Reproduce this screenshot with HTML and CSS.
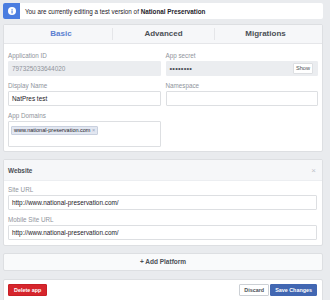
FILE: index.html
```html
<!DOCTYPE html>
<html lang="en">
<head>
<meta charset="utf-8">
<title>App Settings</title>
<link rel="stylesheet" href="styles.css">
</head>
<body>
<div class="page">

  <div class="notice">
    <div class="notice-icon">
      <svg width="8" height="8" viewBox="0 0 8 8"><circle cx="4" cy="4" r="4" fill="#fff"/><rect x="3.5" y="3.4" width="1.1" height="3" fill="#4a7de0"/><circle cx="4.05" cy="2.3" r="0.6" fill="#4a7de0"/></svg>
    </div>
    <div class="notice-text">You are currently editing a test version of <b>National Preservation</b></div>
  </div>

  <div class="panel">
    <div class="tabs">
      <div class="tab active">Basic</div>
      <div class="tab">Advanced</div>
      <div class="tab">Migrations</div>
    </div>
    <div class="form-grid">
      <div class="field">
        <label>Application ID</label>
        <div class="input disabled">797325033644020</div>
      </div>
      <div class="field">
        <label>App secret</label>
        <div class="input disabled secret">
          <span class="dots">&#8226;&#8226;&#8226;&#8226;&#8226;&#8226;&#8226;&#8226;</span>
          <span class="show-btn">Show</span>
        </div>
      </div>
      <div class="field">
        <label>Display Name</label>
        <div class="input">NatPres test</div>
      </div>
      <div class="field">
        <label>Namespace</label>
        <div class="input"></div>
      </div>
      <div class="field">
        <label>App Domains</label>
        <div class="input tokens">
          <span class="token">www.national-preservation.com <span class="token-x">&#215;</span></span>
        </div>
      </div>
    </div>
  </div>

  <div class="panel website">
    <div class="panel-head">
      <span>Website</span>
      <span class="close">&#215;</span>
    </div>
    <div class="panel-body">
      <div class="field">
        <label>Site URL</label>
        <div class="input">http://www.national-preservation.com/</div>
      </div>
      <div class="field">
        <label>Mobile Site URL</label>
        <div class="input">http://www.national-preservation.com/</div>
      </div>
    </div>
  </div>

  <div class="panel add-platform">+ Add Platform</div>

  <div class="panel footer">
    <span class="btn btn-red">Delete app</span>
    <div class="footer-right">
      <span class="btn btn-white">Discard</span>
      <span class="btn btn-blue">Save Changes</span>
    </div>
  </div>

</div>
</body>
</html>
```

FILE: styles.css
```css
body {
  margin: 0;
  background-color: #e9ebee;
  font-family: "Liberation Sans", Arial, sans-serif;
  color: #1d2129;
}
.page {
  width: 320px;
  padding: 3px;
}

/* notice bar */
.notice {
  display: flex; align-items: center;
  height: 16px; background-color: #ffffff; border-radius: 2px;
  margin-bottom: 5px;
}
.notice-icon {
  width: 17px; height: 16px;
  background-color: #4a7de0; border-radius: 2px 0 0 2px;
  display: flex; align-items: center; justify-content: center;
}
.notice-text {
  margin-left: 5px;
  font-size: 6.3px; color: #1d2129;
}

/* panels */
.panel {
  background-color: #ffffff;
  border: 1px solid #dddfe2; border-radius: 2px;
}

.tabs {
  display: grid; grid-template-columns: 1fr 1fr 1fr;
  padding: 3px 6px; background-color: #f6f7f9;
  border-bottom: 1px solid #e5e6e9;
}
.tab {
  height: 12px; line-height: 12px; text-align: center;
  font-size: 8px; font-weight: bold; color: #4b4f56;
}
.tab + .tab { border-left: 1px solid #e5e6e9; }
.tab.active { color: #5b7fd1; }

.form-grid {
  display: grid; grid-template-columns: 1fr 1fr;
  column-gap: 5px; row-gap: 5px;
  padding: 7px 4px 4px 4px;
}

.field label {
  display: block;
  height: 9px; line-height: 9px; margin-bottom: 1px;
  font-size: 6.3px; color: #90949c;
}
.input {
  box-sizing: border-box;
  height: 15px; line-height: 13px; padding: 0 3px;
  border: 1px solid #dddfe2; border-radius: 1px;
  font-size: 6.4px; color: #1d2129;
  white-space: nowrap;
}
.input.disabled {
  background-color: #ebedf0; border-color: #ebedf0; color: #90949c;
}
.input.secret {
  display: flex; align-items: center; justify-content: space-between;
  padding-right: 4px;
}
.dots { color: #4b4f56; font-size: 7.5px; letter-spacing: 0.2px; }
.show-btn {
  height: 9px; line-height: 9px; padding: 0 2px;
  background-color: #ffffff; border: 1px solid #dddfe2; border-radius: 1px;
  font-size: 5.6px; color: #4b4f56;
}
.input.tokens {
  height: 26px; padding: 4px 2px;
}
.token {
  display: inline-block;
  height: 7px; line-height: 7px; padding: 0 2px;
  background-color: #e2e7f1; border: 1px solid #c9d0de; border-radius: 1px;
  font-size: 5.5px; color: #1d2129; vertical-align: top;
}
.token-x { color: #9ba6bd; }

/* website */
.website { margin-top: 7px; }
.panel-head {
  display: flex; justify-content: space-between; align-items: center;
  height: 20px; padding: 0 6px 0 4px;
  background-color: #f6f7f9; border-bottom: 1px solid #eceef1;
  font-size: 6.4px; font-weight: bold; color: #4b4f56;
}
.close { color: #bec2c9; font-weight: normal; font-size: 8px; }
.panel-body {
  display: flex; flex-direction: column; gap: 5px;
  padding: 4px 5px 5px 4px;
}

.add-platform {
  margin-top: 7px;
  height: 16px; line-height: 16px; text-align: center;
  background-color: #f9fafb;
  font-size: 6.5px; font-weight: bold; color: #4b4f56;
}

.footer {
  margin-top: 8px;
  display: flex; justify-content: space-between; align-items: center;
  padding: 4px 5px 6px 4px;
}
.footer-right { display: flex; gap: 1px; }
.btn {
  box-sizing: border-box;
  height: 12px; line-height: 10px; padding: 0 4px;
  border: 1px solid transparent; border-radius: 1px;
  font-size: 5.4px; font-weight: bold;
}
.btn-red { background-color: #d6252c; border-color: #c81f26; color: #ffffff; padding: 0 5px; }
.btn-white { background-color: #ffffff; border-color: #ccd0d5; color: #4b4f56; }
.btn-blue { background-color: #4267b2; border-color: #4267b2; color: #ffffff; }
```
